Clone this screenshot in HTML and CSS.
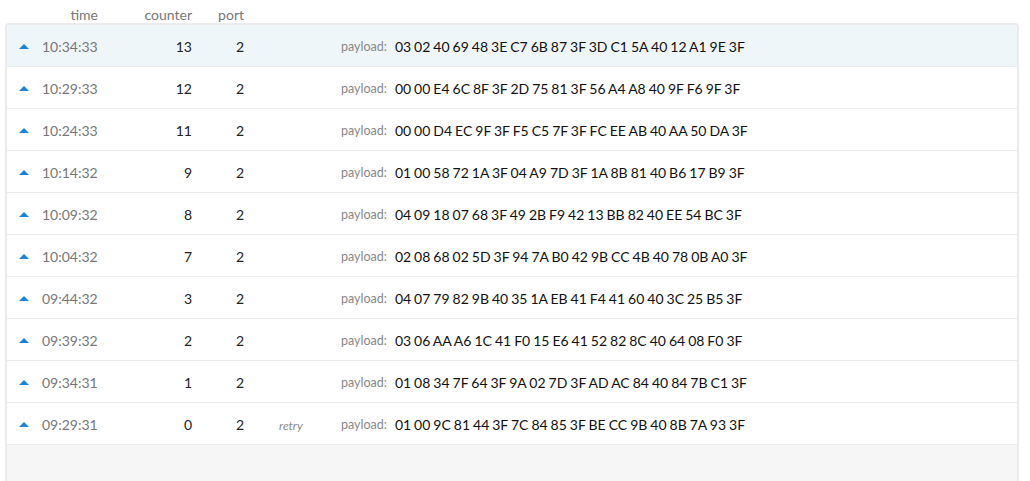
FILE: index.html
```html
<!DOCTYPE html>
<html>
<head>
<meta charset="utf-8">
<link rel="stylesheet" href="styles.css">
</head>
<body>
<div class="head">
  <span class="c-caret"></span>
  <span class="c-time h">time</span>
  <span class="c-counter">counter</span>
  <span class="c-port">port</span>
</div>
<div class="list">
  <div class="row active">
    <span class="c-caret"><span class="caret"></span></span>
    <span class="c-time">10:34:33</span>
    <span class="c-counter">13</span>
    <span class="c-port">2</span>
    <span class="c-flag"></span>
    <span class="label">payload:</span>
    <span class="hex">03 02 40 69 48 3E C7 6B 87 3F 3D C1 5A 40 12 A1 9E 3F</span>
  </div>
  <div class="row">
    <span class="c-caret"><span class="caret"></span></span>
    <span class="c-time">10:29:33</span>
    <span class="c-counter">12</span>
    <span class="c-port">2</span>
    <span class="c-flag"></span>
    <span class="label">payload:</span>
    <span class="hex">00 00 E4 6C 8F 3F 2D 75 81 3F 56 A4 A8 40 9F F6 9F 3F</span>
  </div>
  <div class="row">
    <span class="c-caret"><span class="caret"></span></span>
    <span class="c-time">10:24:33</span>
    <span class="c-counter">11</span>
    <span class="c-port">2</span>
    <span class="c-flag"></span>
    <span class="label">payload:</span>
    <span class="hex">00 00 D4 EC 9F 3F F5 C5 7F 3F FC EE AB 40 AA 50 DA 3F</span>
  </div>
  <div class="row">
    <span class="c-caret"><span class="caret"></span></span>
    <span class="c-time">10:14:32</span>
    <span class="c-counter">9</span>
    <span class="c-port">2</span>
    <span class="c-flag"></span>
    <span class="label">payload:</span>
    <span class="hex">01 00 58 72 1A 3F 04 A9 7D 3F 1A 8B 81 40 B6 17 B9 3F</span>
  </div>
  <div class="row">
    <span class="c-caret"><span class="caret"></span></span>
    <span class="c-time">10:09:32</span>
    <span class="c-counter">8</span>
    <span class="c-port">2</span>
    <span class="c-flag"></span>
    <span class="label">payload:</span>
    <span class="hex">04 09 18 07 68 3F 49 2B F9 42 13 BB 82 40 EE 54 BC 3F</span>
  </div>
  <div class="row">
    <span class="c-caret"><span class="caret"></span></span>
    <span class="c-time">10:04:32</span>
    <span class="c-counter">7</span>
    <span class="c-port">2</span>
    <span class="c-flag"></span>
    <span class="label">payload:</span>
    <span class="hex">02 08 68 02 5D 3F 94 7A B0 42 9B CC 4B 40 78 0B A0 3F</span>
  </div>
  <div class="row">
    <span class="c-caret"><span class="caret"></span></span>
    <span class="c-time">09:44:32</span>
    <span class="c-counter">3</span>
    <span class="c-port">2</span>
    <span class="c-flag"></span>
    <span class="label">payload:</span>
    <span class="hex">04 07 79 82 9B 40 35 1A EB 41 F4 41 60 40 3C 25 B5 3F</span>
  </div>
  <div class="row">
    <span class="c-caret"><span class="caret"></span></span>
    <span class="c-time">09:39:32</span>
    <span class="c-counter">2</span>
    <span class="c-port">2</span>
    <span class="c-flag"></span>
    <span class="label">payload:</span>
    <span class="hex">03 06 AA A6 1C 41 F0 15 E6 41 52 82 8C 40 64 08 F0 3F</span>
  </div>
  <div class="row">
    <span class="c-caret"><span class="caret"></span></span>
    <span class="c-time">09:34:31</span>
    <span class="c-counter">1</span>
    <span class="c-port">2</span>
    <span class="c-flag"></span>
    <span class="label">payload:</span>
    <span class="hex">01 08 34 7F 64 3F 9A 02 7D 3F AD AC 84 40 84 7B C1 3F</span>
  </div>
  <div class="row">
    <span class="c-caret"><span class="caret"></span></span>
    <span class="c-time">09:29:31</span>
    <span class="c-counter">0</span>
    <span class="c-port">2</span>
    <span class="c-flag"><span class="retry">retry</span></span>
    <span class="label">payload:</span>
    <span class="hex">01 00 9C 81 44 3F 7C 84 85 3F BE CC 9B 40 8B 7A 93 3F</span>
  </div>
</div>
</body>
</html>
```
FILE: styles.css
```css
html, body {
  margin: 0;
  padding: 0;
  background: #fff;
  font-family: Lato, "Open Sans", sans-serif;
  font-size: 14px;
  overflow: hidden;
}
.head {
  display: flex;
  align-items: center;
  height: 23px;
  padding-top: 6px;
  box-sizing: border-box;
  padding-left: 7px;
  color: #777;
}
.list {
  margin-left: 5px;
  width: 1010px;
  border: 2px solid #ebebeb;
  border-radius: 4px;
  background: #f6f6f6;
  min-height: 520px;
  overflow: hidden;
}
.row {
  display: flex;
  align-items: center;
  padding-top: 2px;
  box-sizing: content-box;
  height: 39px;
  background: #fff;
  border-bottom: 1px solid #ebebeb;
  color: #222;
}
.row.active {
  background: #eff6fa;
}
.c-caret {
  width: 35px;
  padding-left: 12px;
  box-sizing: border-box;
  display: flex;
  align-items: center;
}
.caret {
  width: 0;
  height: 0;
  border-left: 5px solid transparent;
  border-right: 5px solid transparent;
  border-bottom: 5px solid #1a84d6;
}
.c-time {
  width: 56px;
  color: #777;
}
.c-time.h {
  text-align: right;
}
.c-counter {
  width: 94px;
  text-align: right;
}
.head .c-counter, .head .c-port { color: #777; }
.c-port {
  width: 52px;
  text-align: right;
}
.c-flag {
  width: 97px;
  padding-left: 35px;
  box-sizing: border-box;
}
.retry {
  font-style: italic;
  font-size: 12px;
  color: #888;
}
.label {
  font-size: 12.5px;
  color: #888;
  margin-right: 8px;
}
.hex {
  color: #111;
  word-spacing: -0.6px;
}
```
